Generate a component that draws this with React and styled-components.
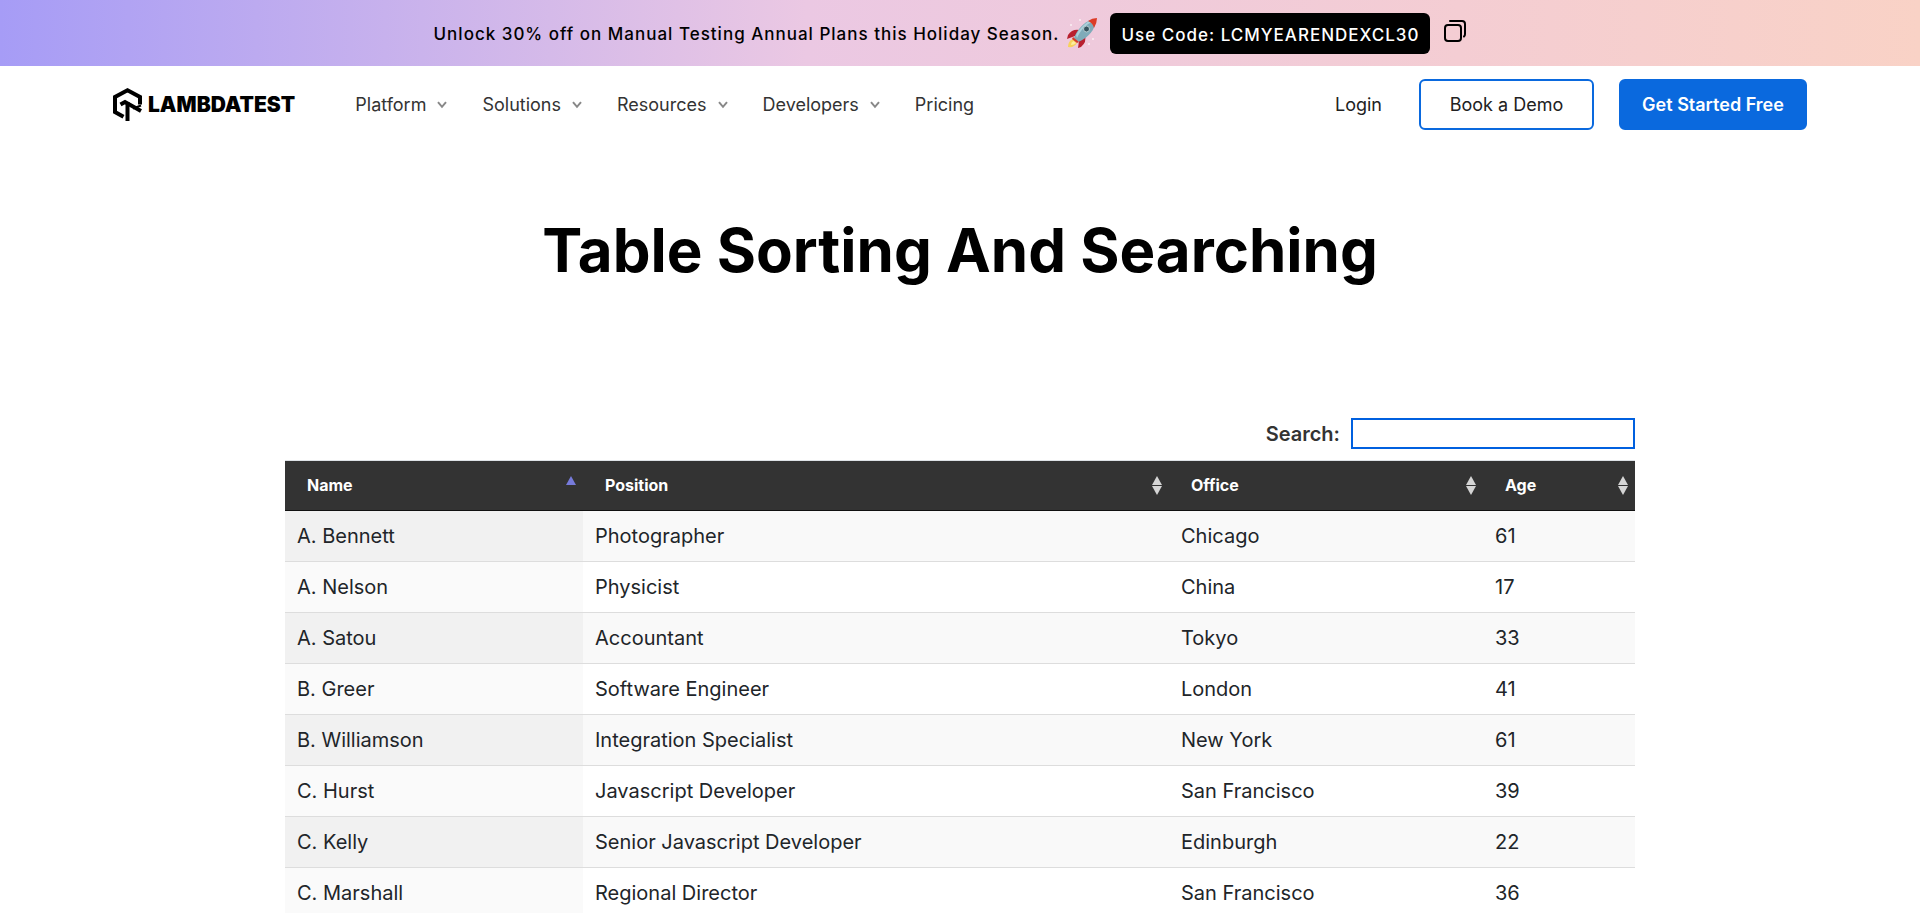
import React from "react";
import styled, { createGlobalStyle } from "styled-components";

const Global = createGlobalStyle`
  *, *::before, *::after { box-sizing: border-box; }
  body {
    margin: 0;
    background: #fff;
    color: #333;
    font-family: Inter, "Liberation Sans", sans-serif;
    overflow-x: hidden;
  }
`;

const Banner = styled.aside`
  display: flex;
  align-items: center;
  justify-content: center;
  min-height: 66px;
  padding: 0 20px 0 0;
  color: #000;
  background: linear-gradient(90deg, #a69cf6 0%, #ebc8e3 42%, #f4cdd3 76%, #f9d2c6 100%);
  font-size: 17px;
  line-height: 26px;
  font-weight: 500;
  letter-spacing: 1px;
`;
const BannerText = styled.p`
  margin: 0;
  padding-top: 2px;
`;
const Rocket = styled.svg`
  width: 32px;
  height: 32px;
  margin: 0 12px 0 7px;
`;
const Code = styled.span`
  padding: 9px 11px 6px;
  border-radius: 6px;
  background: #000;
  color: #fff;
`;
const CopyButton = styled.button`
  display: flex;
  margin: 0 0 4px 14px;
  padding: 0;
  border: 0;
  background: none;
  color: #000;
`;

const Header = styled.header`
  display: flex;
  align-items: center;
  min-height: 77px;
  padding: 0 113px;
`;
const Logo = styled.a`
  display: flex;
  align-items: center;
  gap: 6px;
  color: #000;
  text-decoration: none;
  font-size: 21px;
  font-weight: 900;
`;
const Nav = styled.nav`
  display: flex;
  gap: 35px;
  margin-left: 60px;
`;
const NavButton = styled.button`
  display: flex;
  align-items: center;
  gap: 11px;
  padding: 0;
  border: 0;
  background: none;
  color: #333;
  font: 400 18px/26px Inter, "Liberation Sans", sans-serif;
`;
const NavLink = styled.a`
  color: ${(p) => p.$color || "#333"};
  font-size: 18px;
  line-height: 26px;
  text-decoration: none;
`;
const Actions = styled.div`
  display: flex;
  align-items: center;
  margin-left: auto;
`;
const Cta = styled.a`
  display: flex;
  align-items: center;
  justify-content: center;
  width: ${(p) => (p.$primary ? "188px" : "175px")};
  height: 51px;
  margin-left: ${(p) => (p.$primary ? "25px" : "37px")};
  border: 2px solid #0a69de;
  border-radius: 6px;
  background: ${(p) => (p.$primary ? "#0a69de" : "#fff")};
  color: ${(p) => (p.$primary ? "#fff" : "#212121")};
  font-size: 18px;
  font-weight: ${(p) => (p.$primary ? 600 : 400)};
  text-decoration: none;
`;

const Title = styled.h1`
  margin: 0;
  padding: 68px 16px 129px;
  color: #000;
  font-size: 60px;
  line-height: 78px;
  font-weight: 700;
  text-align: center;
`;

const Main = styled.main`
  width: 100%;
  max-width: 1350px;
  margin: 0 auto;
`;
const Search = styled.label`
  display: flex;
  align-items: center;
  justify-content: flex-end;
  gap: 11px;
  margin-bottom: 11px;
  font-size: 20px;
  font-weight: 600;
`;
const SearchInput = styled.input`
  width: 284px;
  height: 31px;
  padding: 2px 6px;
  border: 2px solid #0060df;
  border-radius: 0;
  background: #fff;
  outline: none;
  font: inherit;
`;

const Table = styled.table`
  width: 100%;
  table-layout: fixed;
  border-collapse: separate;
  border-spacing: 0;
  border-top: 1px solid #dee2e6;
  color: #212529;
`;
const HeadCell = styled.th`
  padding: 0;
  width: ${(p) => p.$width};
  border-bottom: 1px solid #111;
  background: #333;
`;
const SortButton = styled.button`
  display: flex;
  align-items: center;
  justify-content: space-between;
  width: 100%;
  height: 49px;
  padding: 0 7px 1px 22px;
  border: 0;
  background: none;
  color: #fff;
  font: 700 16px/24px Inter, "Liberation Sans", sans-serif;
`;
const Row = styled.tr`
  background: #fff;
  &:nth-child(odd) { background: #f9f9f9; }
`;
const Cell = styled.td`
  height: 51px;
  padding: 0 12px;
  border-bottom: 1px solid #ddd;
  font-size: 20px;
  line-height: 30px;
  &:first-child { background: #fafafa; }
  ${Row}:nth-child(odd) &:first-child { background: #f1f1f1; }
`;

const columns = [
  { label: "Name", width: "298px", sorted: true },
  { label: "Position", width: "auto" },
  { label: "Office", width: "314px" },
  { label: "Age", width: "152px" },
];

const people = [
  ["A. Bennett", "Photographer", "Chicago", 61],
  ["A. Nelson", "Physicist", "China", 17],
  ["A. Satou", "Accountant", "Tokyo", 33],
  ["B. Greer", "Software Engineer", "London", 41],
  ["B. Williamson", "Integration Specialist", "New York", 61],
  ["C. Hurst", "Javascript Developer", "San Francisco", 39],
  ["C. Kelly", "Senior Javascript Developer", "Edinburgh", 22],
  ["C. Marshall", "Regional Director", "San Francisco", 36],
];

const Chevron = () => (
  <svg width="10" height="8" viewBox="0 0 10 8" fill="none" stroke="#888" strokeWidth="2" aria-hidden="true">
    <path d="M1 1.2 5 5.8 9 1.2" />
  </svg>
);

const SortIcon = ({ sorted }) => (
  <svg width="10" height="19" viewBox="0 0 10 19" aria-hidden="true">
    <path d="M5 0 10 9H0z" fill={sorted ? "#777bdb" : "#d5d5d5"} />
    {!sorted && <path d="M5 19 10 10H0z" fill="#d5d5d5" />}
  </svg>
);

export default function App() {
  return (
    <>
      <Global />
      <Banner>
        <BannerText>Unlock 30% off on Manual Testing Annual Plans this Holiday Season.</BannerText>
        <Rocket viewBox="0 0 32 32" aria-hidden="true">
          <path d="M7 22Q2 24 2 30 8 31 11 26z" fill="#f7d25c" />
          <path d="M7.500 24Q5 25 5 28 8 28 10 26z" fill="#fbeea0" />
          <path d="M13 13Q6 12 2 18L1 22 9 19z" fill="#b8202f" />
          <path d="M19 18Q21 25 15 30L12 31 13 24z" fill="#b8202f" />
          <path d="M8 21C11 13 18 5 25 3L29 8C27 15 20 22 12 25z" fill="#7fabb9" />
          <path d="M10 18C13 12 19 6 25 3L26 5C19 8 14 14 11 21z" fill="#acd0da" />
          <path d="M7 20 13 25 11 26 6 22z" fill="#d53a28" />
          <path d="M22 4Q26 1 31 1 31 6 28 11 27 6 22 4z" fill="#dc3b27" />
          <circle cx="20.500" cy="12" r="3" fill="#36545f" stroke="#b6ccd2" />
          <g fill="#fff" opacity=".7">
            <circle cx="14" cy="3" r="1" />
            <circle cx="5" cy="8" r="1" />
            <circle cx="27" cy="22" r="1" />
            <circle cx="23" cy="27" r="1" />
          </g>
        </Rocket>
        <Code>Use Code: LCMYEARENDEXCL30</Code>
        <CopyButton type="button" aria-label="Copy code">
          <svg width="22" height="22" viewBox="0 0 22 22" fill="none" stroke="currentColor" strokeWidth="2" strokeLinecap="round">
            <rect x="1" y="5" width="16" height="16" rx="3" />
            <path d="M6 1H18Q21 1 21 4V14Q21 16 20 16.500" />
          </svg>
        </CopyButton>
      </Banner>
      <Header>
        <Logo href="#">
          <svg width="29" height="33" viewBox="0 0 29 33" fill="none" stroke="#000" strokeWidth="4" aria-hidden="true">
            <path d="M10.500 28.800 2 24V9L14.500 2.300 27 9V16.500" />
            <path d="M7.500 16.500 12 14 28 23" />
            <path d="M20 20.500 28 17.500" strokeWidth="2" />
            <path d="M14.500 14V33" />
          </svg>
          LAMBDATEST
        </Logo>
        <Nav aria-label="Main">
          {["Platform", "Solutions", "Resources", "Developers"].map((item) => (
            <NavButton type="button" key={item}>{item}<Chevron /></NavButton>
          ))}
          <NavLink href="#">Pricing</NavLink>
        </Nav>
        <Actions>
          <NavLink href="#" $color="#212121">Login</NavLink>
          <Cta href="#">Book a Demo</Cta>
          <Cta href="#" $primary>Get Started Free</Cta>
        </Actions>
      </Header>
      <Title>Table Sorting And Searching</Title>
      <Main>
        <Search>
          Search:
          <SearchInput type="search" />
        </Search>
        <Table>
          <thead>
            <tr>
              {columns.map((c) => (
                <HeadCell key={c.label} scope="col" $width={c.width} aria-sort={c.sorted ? "ascending" : "none"}>
                  <SortButton type="button">{c.label}<SortIcon sorted={c.sorted} /></SortButton>
                </HeadCell>
              ))}
            </tr>
          </thead>
          <tbody>
            {people.map((person) => (
              <Row key={person[0]}>
                {person.map((value, i) => <Cell key={i}>{value}</Cell>)}
              </Row>
            ))}
          </tbody>
        </Table>
      </Main>
    </>
  );
}
